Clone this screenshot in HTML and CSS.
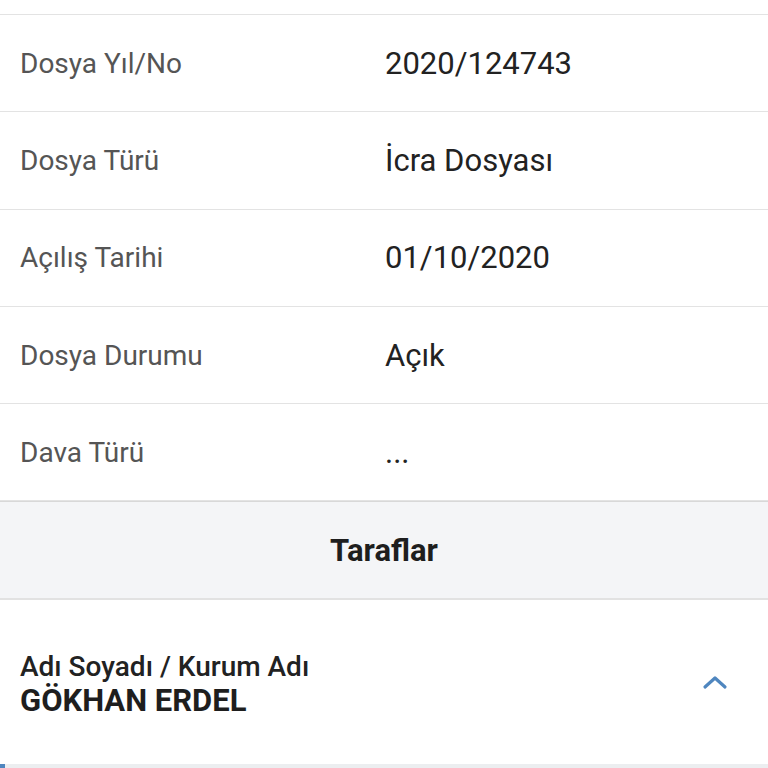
FILE: index.html
```html
<!DOCTYPE html>
<html lang="tr">
<head>
<meta charset="utf-8">
<link rel="stylesheet" href="styles.css">
</head>
<body>
<div class="page">
  <div class="top-gap"></div>
  <div class="details">
    <div class="row"><div class="label">Dosya Yıl/No</div><div class="value">2020/124743</div></div>
    <div class="row"><div class="label">Dosya Türü</div><div class="value">İcra Dosyası</div></div>
    <div class="row"><div class="label">Açılış Tarihi</div><div class="value">01/10/2020</div></div>
    <div class="row"><div class="label">Dosya Durumu</div><div class="value">Açık</div></div>
    <div class="row"><div class="label">Dava Türü</div><div class="value">...</div></div>
  </div>
  <div class="section-header">Taraflar</div>
  <div class="party">
    <div class="party-text">
      <div class="party-label">Adı Soyadı / Kurum Adı</div>
      <div class="party-name">GÖKHAN ERDEL</div>
    </div>
    <svg class="chevron" width="26" height="16" viewBox="0 0 26 16"><path d="M3 13 L13 4 L23 13" fill="none" stroke="#4f86bf" stroke-width="3.2" stroke-linecap="round" stroke-linejoin="round"/></svg>
  </div>
  <div class="bottom"><span class="bottom-mark"></span></div>
</div>
</body>
</html>
```
FILE: styles.css
```css
html, body { margin: 0; padding: 0; background: #fff; }
body { font-family: Roboto, "Noto Sans", sans-serif; width: 768px; height: 768px; overflow: hidden; }
.page { display: flex; flex-direction: column; }
.top-gap { height: 14px; border-bottom: 1.5px solid #e3e3e3; }
.details { display: flex; flex-direction: column; }
.row { display: flex; align-items: center; height: 96.3px; border-bottom: 1.5px solid #e3e3e3; }
.label { width: 365px; padding-left: 20px; font-size: 28px; color: #555; }
.value { font-size: 31px; color: #222; }
.section-header { height: 96px; display: flex; align-items: center; justify-content: center; background: #f4f5f7; border-top: 1px solid #d8d8d8; border-bottom: 2px solid #e2e2e2; font-size: 31px; font-weight: 700; color: #1e1e1e; }
.party { height: 164px; display: flex; align-items: center; justify-content: space-between; padding: 0 40px 0 20px; }
.party-text { display: flex; flex-direction: column; margin-top: 4px; }
.party-label { font-size: 28px; font-weight: 500; color: #222; line-height: 33px; }
.party-name { font-size: 31px; font-weight: 700; color: #1e1e1e; line-height: 36px; }
.chevron { display: block; }
.bottom { height: 4px; background: #eceef0; position: relative; }
.bottom-mark { position: absolute; left: 0; top: 0; width: 5px; height: 4px; background: #4f86bf; }
```
